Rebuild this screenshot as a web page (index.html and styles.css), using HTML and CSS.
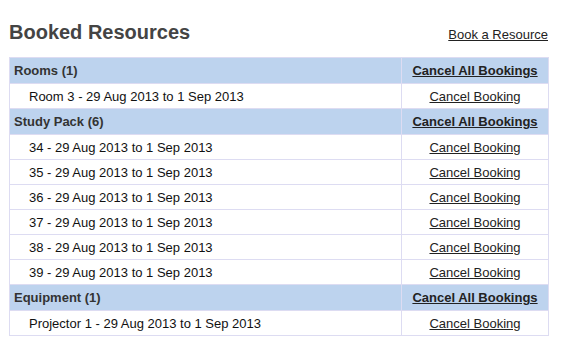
FILE: index.html
```html
<!DOCTYPE html>
<html lang="en">
<head>
    <meta charset="UTF-8">
    <title>Booked Resources</title>
    <link rel="stylesheet" href="styles.css">
</head>
<body>
    <div class="page">
        <div class="title-bar">
            <h1>Booked Resources</h1>
            <a href="#" class="book-link">Book a Resource</a>
        </div>
        <table class="bookings">
            <tr class="group">
                <td>Rooms (1)</td>
                <td class="action"><a href="#">Cancel All Bookings</a></td>
            </tr>
            <tr>
                <td class="item">Room 3 - 29 Aug 2013 to 1 Sep 2013</td>
                <td class="action"><a href="#">Cancel Booking</a></td>
            </tr>
            <tr class="group">
                <td>Study Pack (6)</td>
                <td class="action"><a href="#">Cancel All Bookings</a></td>
            </tr>
            <tr>
                <td class="item">34 - 29 Aug 2013 to 1 Sep 2013</td>
                <td class="action"><a href="#">Cancel Booking</a></td>
            </tr>
            <tr>
                <td class="item">35 - 29 Aug 2013 to 1 Sep 2013</td>
                <td class="action"><a href="#">Cancel Booking</a></td>
            </tr>
            <tr>
                <td class="item">36 - 29 Aug 2013 to 1 Sep 2013</td>
                <td class="action"><a href="#">Cancel Booking</a></td>
            </tr>
            <tr>
                <td class="item">37 - 29 Aug 2013 to 1 Sep 2013</td>
                <td class="action"><a href="#">Cancel Booking</a></td>
            </tr>
            <tr>
                <td class="item">38 - 29 Aug 2013 to 1 Sep 2013</td>
                <td class="action"><a href="#">Cancel Booking</a></td>
            </tr>
            <tr>
                <td class="item">39 - 29 Aug 2013 to 1 Sep 2013</td>
                <td class="action"><a href="#">Cancel Booking</a></td>
            </tr>
            <tr class="group">
                <td>Equipment (1)</td>
                <td class="action"><a href="#">Cancel All Bookings</a></td>
            </tr>
            <tr>
                <td class="item">Projector 1 - 29 Aug 2013 to 1 Sep 2013</td>
                <td class="action"><a href="#">Cancel Booking</a></td>
            </tr>
        </table>
    </div>
</body>
</html>
```

FILE: styles.css
```css
body {
    margin: 0;
    padding: 0;
    background-color: #fff;
    font-family: 'Liberation Sans', Arial, sans-serif;
    font-size: 13px;
    color: #111;
}
.page {
    width: 540px;
    padding: 0 0 0 9px;
}
.title-bar {
    display: flex;
    justify-content: space-between;
    align-items: baseline;
    padding-top: 21px;
    margin-bottom: 14px;
}
h1 {
    margin: 0;
    font-size: 20px;
    font-weight: 700;
    color: #444;
    line-height: 22px;
}
.book-link {
    color: #222;
    font-size: 13px;
    margin-right: 1px;
}
.bookings {
    width: 540px;
    border-collapse: collapse;
}
.bookings td {
    border: 1px solid #dddcf2;
    height: 25px;
    padding: 0 4px;
    box-sizing: border-box;
}
.bookings .item {
    padding-left: 19px;
}
.bookings .action {
    width: 147px;
    text-align: center;
    padding: 0;
}
.bookings a {
    color: #222;
}
.group td {
    height: 26px;
    background-color: #bdd3ee;
    font-weight: 700;
    color: #333;
}
```
